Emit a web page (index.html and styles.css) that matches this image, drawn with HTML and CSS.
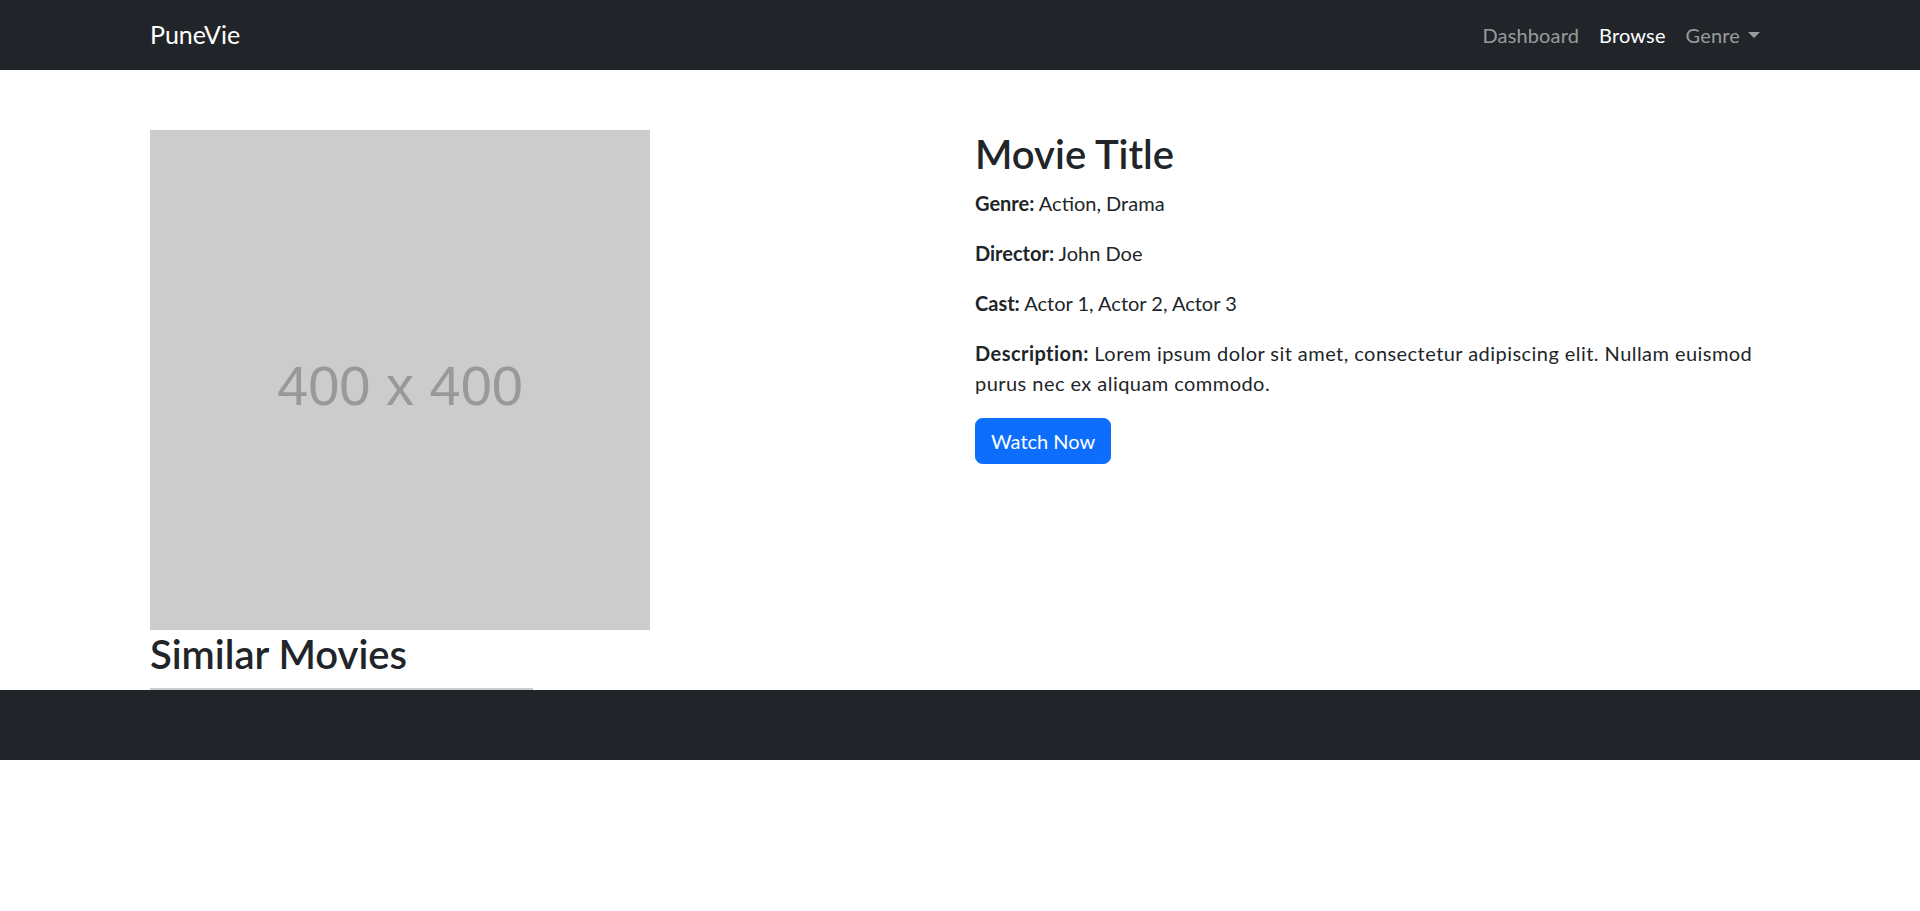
FILE: index.html
```html
<!DOCTYPE html>
<html lang="en">
<head>
<meta charset="utf-8">
<title>PuneVie - Movie</title>
<link rel="stylesheet" href="styles.css">
</head>
<body>
<nav class="navbar">
  <div class="nav-inner">
    <a class="brand" href="#">PuneVie</a>
    <ul class="nav-links">
      <li><a class="nav-link" href="#">Dashboard</a></li>
      <li><a class="nav-link active" href="#">Browse</a></li>
      <li><a class="nav-link dropdown-toggle" href="#">Genre</a></li>
    </ul>
  </div>
</nav>
<main class="page">
  <div class="container">
    <div class="movie-row">
      <div class="col">
        <div class="poster"><span class="poster-label">400 x 400</span></div>
        <h2 class="section-title">Similar Movies</h2>
        <div class="similar-row">
          <div class="similar-card"></div>
        </div>
      </div>
      <div class="col">
        <h2 class="movie-title">Movie Title</h2>
        <p class="info"><strong>Genre:</strong> Action, Drama</p>
        <p class="info"><strong>Director:</strong> John Doe</p>
        <p class="info"><strong>Cast:</strong> Actor 1, Actor 2, Actor 3</p>
        <p class="info desc"><strong>Description:</strong> Lorem ipsum dolor sit amet, consectetur adipiscing elit. Nullam euismod purus nec ex aliquam commodo.</p>
        <a class="btn-primary" href="#">Watch Now</a>
      </div>
    </div>
  </div>
</main>
<footer class="footer"></footer>
</body>
</html>
```

FILE: styles.css
```css
* { box-sizing: border-box; }
html, body {
  margin: 0;
  padding: 0;
  background: #fff;
}
body {
  font-family: "Segoe UI", Lato, "Liberation Sans", sans-serif;
  font-size: 20px;
  line-height: 1.5;
  color: #212529;
}
a { text-decoration: none; }

.navbar {
  background: #212529;
  height: 70px;
}
.nav-inner {
  width: 1620px;
  margin: 0 auto;
  height: 100%;
  display: flex;
  align-items: center;
  justify-content: space-between;
}
.brand {
  color: #fff;
  font-size: 25px;
  line-height: 1.5;
}
.nav-links {
  list-style: none;
  margin: 0;
  padding: 0;
  display: flex;
}
.nav-link {
  display: block;
  padding: 10px 10px;
  color: rgba(255,255,255,0.55);
  line-height: 30px;
  letter-spacing: 0.15px;
}
.nav-link.active { color: #fff; }
.dropdown-toggle::after {
  content: "";
  display: inline-block;
  margin-left: 0.4em;
  vertical-align: 0.255em;
  border-top: 0.3em solid;
  border-right: 0.3em solid transparent;
  border-left: 0.3em solid transparent;
}

.page {
  height: 620px;
  overflow: hidden;
}
.container {
  width: 1620px;
  margin: 0 auto;
  padding-top: 60px;
}
.movie-row {
  display: grid;
  grid-template-columns: 1fr 1fr;
  column-gap: 30px;
}
.poster {
  width: 500px;
  height: 500px;
  background: #cccccc;
  display: flex;
  align-items: center;
  justify-content: center;
}
.poster-label {
  font-family: "Liberation Sans", Arial, sans-serif;
  font-size: 56px;
  color: #999999;
  line-height: 1;
  margin-top: 12px;
}
.section-title,
.movie-title {
  font-size: 40px;
  font-weight: 600;
  line-height: 1.2;
  margin: 0 0 10px;
}
.similar-row {
  display: flex;
  gap: 30px;
}
.similar-card {
  width: 383px;
  height: 383px;
  background: #cccccc;
}
.info {
  margin: 0 0 20px;
}
.info strong { font-weight: 700; }
.desc { letter-spacing: 0.45px; }
.btn-primary {
  display: inline-block;
  background: #0d6efd;
  color: #fff;
  border: 1px solid #0d6efd;
  border-radius: 7.5px;
  padding: 7px 15px;
  line-height: 30px;
  font-size: 20px;
}
.footer {
  background: #212529;
  height: 70px;
}
```
